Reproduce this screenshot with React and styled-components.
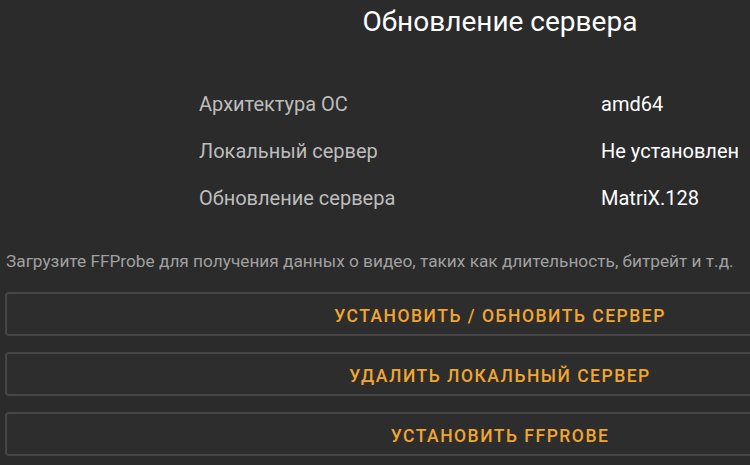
import React from "react";
import styled, { createGlobalStyle } from "styled-components";

const Global = createGlobalStyle`
  html, body {
    margin: 0;
    padding: 0;
    background: #2b2b2b;
    overflow: hidden;
  }
  body {
    font-family: Roboto, "Noto Sans", sans-serif;
  }
`;

const Screen = styled.div`
  width: 1000px;
  height: 465px;
  background: #2b2b2b;
  display: flex;
  flex-direction: column;
  padding: 0 5px;
  box-sizing: border-box;
`;

const Title = styled.h1`
  margin: 0;
  padding-top: 3px;
  height: 42px;
  font-size: 28px;
  font-weight: 400;
  line-height: 38px;
  color: #ffffff;
  text-align: center;
`;

const InfoTable = styled.div`
  display: grid;
  grid-template-columns: 402px 220px;
  grid-auto-rows: 47px;
  margin: 36px 0 0 194px;
`;

const Label = styled.div`
  font-size: 20px;
  line-height: 47px;
  color: #bdbdbd;
`;

const Value = styled.div`
  font-size: 20px;
  line-height: 47px;
  color: #ffffff;
`;

const Hint = styled.p`
  margin: 28px 0 0 1px;
  font-size: 17.25px;
  line-height: 22px;
  color: #a0a0a0;
  white-space: nowrap;
`;

const Actions = styled.div`
  display: flex;
  flex-direction: column;
  gap: 16px;
  margin-top: 20px;
`;

const ActionButton = styled.button`
  height: 44px;
  width: 100%;
  box-sizing: border-box;
  background: #2d2d2d;
  border: 2px solid #464646;
  border-radius: 4px;
  color: #f2a630;
  font-family: Roboto, "Noto Sans", sans-serif;
  font-size: 17.5px;
  font-weight: 500;
  letter-spacing: 1.5px;
  text-transform: uppercase;
  padding: 3px 0 0;
  cursor: pointer;
`;

const rows = [
  ["Архитектура ОС", "amd64"],
  ["Локальный сервер", "Не установлен"],
  ["Обновление сервера", "MatriX.128"],
];

const actions = [
  "Установить / обновить сервер",
  "Удалить локальный сервер",
  "Установить FFProbe",
];

export default function App() {
  return (
    <Screen>
      <Global />
      <Title>Обновление сервера</Title>
      <InfoTable>
        {rows.map(([label, value]) => (
          <React.Fragment key={label}>
            <Label>{label}</Label>
            <Value>{value}</Value>
          </React.Fragment>
        ))}
      </InfoTable>
      <Hint>
        Загрузите FFProbe для получения данных о видео, таких как длительность, битрейт и т.д.
      </Hint>
      <Actions>
        {actions.map((text) => (
          <ActionButton key={text}>{text}</ActionButton>
        ))}
      </Actions>
    </Screen>
  );
}
